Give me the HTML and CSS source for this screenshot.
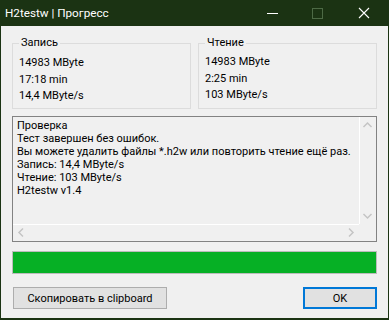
FILE: index.html
```html
<!DOCTYPE html>
<html lang="ru">
<head>
  <meta charset="UTF-8">
  <title>H2testw | Прогресс</title>
  <link rel="stylesheet" href="styles.css">
</head>
<body>
  <div class="window">
    <div class="titlebar">
      <span class="title">H2testw | Прогресс</span>
      <div class="controls">
        <svg class="ctl" width="46" height="26" viewBox="0 0 46 26"><path d="M18 13.5h11" stroke="#fff" stroke-width="1"/></svg>
        <svg class="ctl" width="46" height="26" viewBox="0 0 46 26"><rect x="17.5" y="8.5" width="10" height="10" fill="none" stroke="#4d6a45" stroke-width="1"/></svg>
        <svg class="ctl" width="46" height="26" viewBox="0 0 46 26"><path d="M18 8l10 10M28 8l-10 10" stroke="#fff" stroke-width="1.1"/></svg>
      </div>
    </div>

    <div class="main">
      <div class="groups">
        <fieldset class="group">
          <legend>Запись</legend>
          <div>14983 MByte</div>
          <div>17:18 min</div>
          <div>14,4 MByte/s</div>
        </fieldset>
        <fieldset class="group group-read">
          <legend>Чтение</legend>
          <div>14983 MByte</div>
          <div>2:25 min</div>
          <div>103 MByte/s</div>
        </fieldset>
      </div>

      <div class="log">
        <div class="log-text">
          <div>Проверка</div>
          <div>Тест завершен без ошибок.</div>
          <div>Вы можете удалить файлы *.h2w или повторить чтение ещё раз.</div>
          <div>Запись: 14,4 MByte/s</div>
          <div>Чтение: 103 MByte/s</div>
          <div>H2testw v1.4</div>
        </div>
        <div class="vscroll">
          <svg width="17" height="17" viewBox="0 0 17 17"><path d="M4.5 10l4-4 4 4" fill="none" stroke="#c4c4c4" stroke-width="1.5"/></svg>
          <svg width="17" height="17" viewBox="0 0 17 17"><path d="M4.5 7l4 4 4-4" fill="none" stroke="#c4c4c4" stroke-width="1.5"/></svg>
        </div>
        <div class="hscroll">
          <svg width="17" height="17" viewBox="0 0 17 17"><path d="M10 4.5l-4 4 4 4" fill="none" stroke="#c4c4c4" stroke-width="1.5"/></svg>
          <svg width="17" height="17" viewBox="0 0 17 17"><path d="M7 4.5l4 4-4 4" fill="none" stroke="#c4c4c4" stroke-width="1.5"/></svg>
        </div>
        <div class="corner"></div>
      </div>

      <div class="progress"><div class="progress-fill" style="width: 100%"></div></div>

      <div class="buttons">
        <button class="btn btn-copy">Скопировать в clipboard</button>
        <button class="btn btn-ok">OK</button>
      </div>
    </div>
  </div>
</body>
</html>
```

FILE: styles.css
```css
* {
  box-sizing: border-box;
}

body {
  margin: 0;
  background: #1b3313;
  font-family: Roboto, "Noto Sans", sans-serif;
  font-size: 11px;
  color: #000;
}

.window {
  width: 389px;
  height: 320px;
  border: 1px solid #1b3313;
  border-top: none;
  border-bottom-width: 2px;
  display: flex;
  flex-direction: column;
  background: #f0f0f0;
}

.titlebar {
  height: 26px;
  background: #1b3313;
  color: #fff;
  display: flex;
  align-items: center;
  justify-content: space-between;
  margin: 0 -1px;
}

.title {
  padding-left: 5px;
  font-size: 11.7px;
  line-height: 26px;
}

.controls {
  display: flex;
  padding-right: 2px;
}

.ctl {
  display: block;
}

.main {
  flex: 1;
  padding: 0 11px;
  display: flex;
  flex-direction: column;
}

.groups {
  display: grid;
  grid-template-columns: 1fr 1fr;
  gap: 7px;
  margin-top: 9px;
}

.group {
  margin: 0;
  border: 1px solid #dcdcdc;
  padding: 4px 6px 3px 6px;
  min-width: 0;
  line-height: 16.5px;
  height: 74px;
}

.group legend {
  padding: 0 2px;
  margin-left: 0;
  line-height: 16px;
}

.group-read {
  padding-top: 3px;
}

.log {
  margin-top: 7px;
  height: 126px;
  border: 1px solid #828282;
  display: grid;
  grid-template-columns: 1fr 17px;
  grid-template-rows: 1fr 17px;
  background: #f0f0f0;
}

.log-text {
  padding: 2px 0 0 4px;
  line-height: 13px;
  white-space: nowrap;
  overflow: hidden;
}

.vscroll {
  display: flex;
  flex-direction: column;
  justify-content: space-between;
  border-left: 1px solid #fff;
  background: #f0f0f0;
}

.vscroll svg {
  margin-left: -1px;
}

.hscroll {
  display: flex;
  justify-content: space-between;
  border-top: 1px solid #fff;
  background: #f0f0f0;
}

.hscroll svg {
  margin-top: -1px;
}

.corner {
  background: #f0f0f0;
}

.progress {
  margin-top: 9px;
  height: 23px;
  border: 1px solid #bcbcbc;
  background: #e6e6e6;
}

.progress-fill {
  height: 100%;
  background: #06b025;
}

.buttons {
  margin-top: 13px;
  display: flex;
  justify-content: space-between;
}

.btn {
  height: 22px;
  font-family: inherit;
  font-size: 11px;
  color: #000;
  background: #e1e1e1;
  border: 1px solid #adadad;
  padding: 0;
  margin: 0;
}

.btn-copy {
  width: 154px;
  margin-left: 1px;
}

.btn-ok {
  width: 74px;
  border: 2px solid #0078d7;
}
```
